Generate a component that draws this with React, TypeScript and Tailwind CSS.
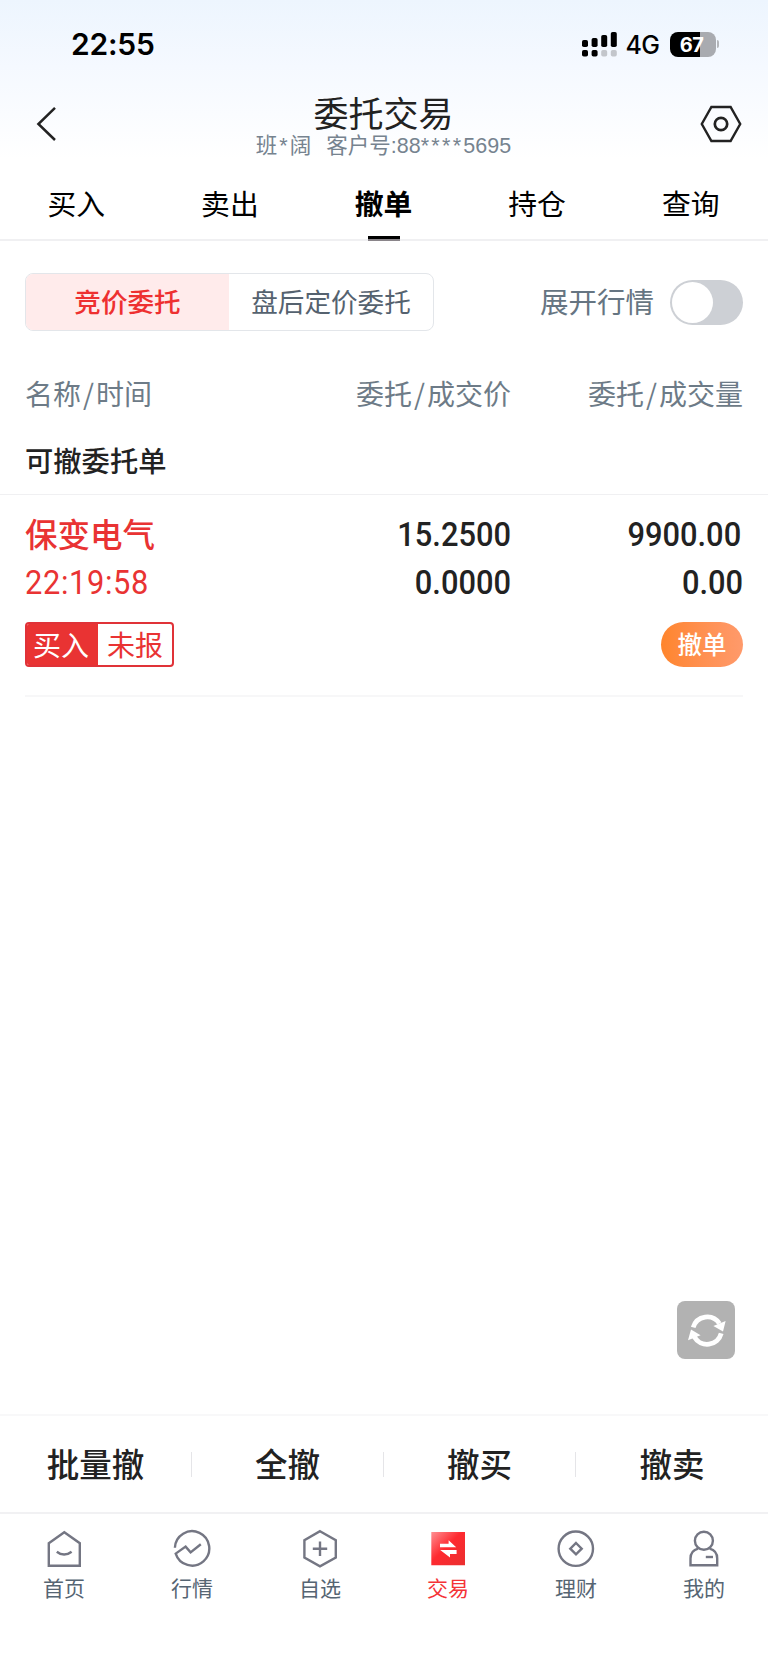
import { useState, type ReactNode } from "react";

interface Order {
  id: string;
  name: string;
  time: string;
  side: string;
  status: string;
  price: string;
  dealPrice: string;
  amount: string;
  dealAmount: string;
}

interface NavItem {
  label: string;
  icon: ReactNode;
}

const tabs = ["买入", "卖出", "撤单", "持仓", "查询"];

const actions = ["批量撤", "全撤", "撤买", "撤卖"];

const orders: Order[] = [
  {
    id: "1",
    name: "保变电气",
    time: "22:19:58",
    side: "买入",
    status: "未报",
    price: "15.2500",
    dealPrice: "0.0000",
    amount: "9900.00",
    dealAmount: "0.00",
  },
];

const navItems: NavItem[] = [
  {
    label: "首页",
    icon: (
      <svg className="w-10 h-10" viewBox="0 0 40 40" fill="none" stroke="#747683" strokeWidth={2.4}>
        <path d="M4.8 14.2L20.3 3.2L35.8 14.2V36.7H4.8Z" />
        <path d="M12.8 22.7Q20 28.5 27.6 22.7" />
      </svg>
    ),
  },
  {
    label: "行情",
    icon: (
      <svg className="w-10 h-10" viewBox="0 0 40 40" fill="none" stroke="#747683" strokeWidth={2.4}>
        <path d="M2.9 18.8A17.2 17.2 0 1 1 3.7 24.6L13.6 17.6L18.6 23.4L28.8 15.2" />
      </svg>
    ),
  },
  {
    label: "自选",
    icon: (
      <svg className="w-10 h-10" viewBox="0 0 40 40" fill="none" stroke="#747683" strokeWidth={2.4}>
        <path d="M20 2.2L35.8 11.2V28.6L20 37.4L4.4 28.6V11.2Z" />
        <path d="M20 12.5V27M12.8 19.7H27.2" />
      </svg>
    ),
  },
  {
    label: "交易",
    icon: (
      <svg className="w-10 h-10" viewBox="0 0 40 40">
        <defs>
          <linearGradient id="trade" x1="0" y1="0" x2="1" y2="1">
            <stop offset="0" stopColor="#ff8f92" />
            <stop offset="0.45" stopColor="#fe2a30" />
            <stop offset="1" stopColor="#ea2f2f" />
          </linearGradient>
        </defs>
        <path d="M3.3 3H37V36.3H3.3Z" fill="url(#trade)" />
        <path d="M12 14.8H20.6V11.2L28.2 18.2H12ZM28.6 21V25H22V28.6L12.2 21Z" fill="#fff" />
      </svg>
    ),
  },
  {
    label: "理财",
    icon: (
      <svg className="w-10 h-10" viewBox="0 0 40 40" fill="none" stroke="#747683" strokeWidth={2.4}>
        <circle cx="19.8" cy="19.7" r="17.2" />
        <path d="M20 14L25.7 19.7L20 25.4L14.3 19.7Z" />
      </svg>
    ),
  },
  {
    label: "我的",
    icon: (
      <svg className="w-10 h-10" viewBox="0 0 40 40" fill="none" stroke="#747683" strokeWidth={2.4}>
        <circle cx="19.9" cy="11.8" r="9" />
        <path d="M14.2 19.6Q6.5 21.5 6.5 29.5V36.3H33.2V29.5Q33.2 21.5 25.6 19.6" />
        <path d="M21.8 28H29" />
      </svg>
    ),
  },
];

function StatusBar() {
  return (
    <div className="flex h-[84px] items-center justify-between pl-[71px] pr-[49px] pt-[4px] font-['Inter',sans-serif] text-black">
      <span className="text-[30px] font-semibold leading-none tracking-[-0.2px]">22:55</span>
      <div className="flex items-center">
        <svg className="h-[25px] w-[35px]" viewBox="0 0 35 25">
          <rect x="0" y="8" width="6" height="7" rx="1.8" />
          <rect x="9.6" y="6" width="6" height="9" rx="1.8" />
          <rect x="19.2" y="3" width="6" height="12" rx="1.8" />
          <rect x="28.8" y="0" width="6" height="15" rx="1.8" />
          <rect x="0" y="18" width="6" height="6.5" rx="1.8" />
          <rect x="9.6" y="18" width="6" height="6.5" rx="1.8" />
          <rect x="19.2" y="18" width="6" height="6.5" rx="1.8" fill="#c3c6cb" />
          <rect x="28.8" y="18" width="6" height="6.5" rx="1.8" fill="#c3c6cb" />
        </svg>
        <span className="ml-[9px] w-[34px] whitespace-nowrap pt-[2px] text-[25px] font-medium leading-none tracking-[-0.6px]">
          4G
        </span>
        <div className="ml-[10px] flex h-[25px] w-[46px] items-center justify-center rounded-[8px] bg-[linear-gradient(90deg,#000_66%,#a9abb0_66%)] pr-[2px] pt-[1px] text-[20px] font-bold leading-none tracking-[-0.5px] text-white">
          67
        </div>
        <div className="ml-[1px] h-[8px] w-[2.5px] rounded-r-full bg-[#b4b6ba]" />
      </div>
    </div>
  );
}

function Header() {
  return (
    <header className="flex h-[84px] items-start justify-between pl-[36px] pr-[26px]">
      <button className="mt-[22px]">
        <svg className="h-[36px] w-[22px]" viewBox="0 0 22 36" fill="none" stroke="#222" strokeWidth={2.5}>
          <path d="M19 1.8L2.4 18L19 34" />
        </svg>
      </button>
      <div className="flex flex-col items-center pl-[9px]">
        <h1 className="mt-[9px] h-[41px] text-[35px] leading-[38px] text-[#222]">委托交易</h1>
        <p className="h-[24px] whitespace-pre text-[21.5px] leading-[24px] text-[#76838f] font-['Liberation_Sans','Noto_Sans_CJK_SC',sans-serif]">
          班<span className="px-[2px]">*</span>阔<span className="pl-[15px]">客户号:88</span>
          <span className="tracking-[2.3px]">****</span>5695
        </p>
      </div>
      <button className="mt-[20px]">
        <svg className="h-[40px] w-[42px]" viewBox="0 0 42 40" fill="none" stroke="#222" strokeWidth={2.4}>
          <path d="M11.4 3H30.6L40.2 20L30.6 37H11.4L1.8 20Z" />
          <circle cx="21" cy="20" r="6.2" strokeWidth={2.7} />
        </svg>
      </button>
    </header>
  );
}

export default function App() {
  const [activeTab, setActiveTab] = useState("撤单");
  const [expanded, setExpanded] = useState(false);

  return (
    <div className="flex h-[1662px] w-[768px] flex-col overflow-hidden bg-white font-['Noto_Sans_CJK_SC',sans-serif] text-[#222]">
      <div className="bg-[linear-gradient(180deg,#edf5fe_0%,#f5f9ff_40%,#fff_95%)]">
        <StatusBar />
        <Header />
      </div>

      {/* Tabs */}
      <nav className="grid h-[73px] grid-cols-5 border-b-2 border-[#f0f0f2]">
        {tabs.map((tab) => (
          <button
            key={tab}
            className={`relative text-[28.8px] leading-[69px] text-black ${activeTab === tab ? "font-bold" : ""}`}
            onClick={() => setActiveTab(tab)}
          >
            <span className="block h-[71px] pr-[1px]">{tab}</span>
            {activeTab === tab && (
              <span className="absolute -bottom-[2px] left-1/2 h-[5px] w-[32px] -translate-x-1/2 border-b-2 border-[#8a858a] bg-black" />
            )}
          </button>
        ))}
      </nav>

      {/* Order type and quote switch */}
      <div className="mt-[32px] flex h-[58px] items-center justify-between px-[25px]">
        <div className="flex h-full w-[409px] overflow-hidden rounded-[8px] border border-[#e3e6ea] text-[26.6px]">
          <button className="w-[203px] bg-[#ffebeb] pb-[3px] font-medium text-[#ee3030]">竞价委托</button>
          <button className="flex-1 pb-[3px] text-[#55626f]">盘后定价委托</button>
        </div>
        <div className="flex items-center gap-[16px]">
          <span className="pb-[2px] text-[28.5px] text-[#667582]">展开行情</span>
          <button
            className={`flex h-[45px] w-[73px] items-center rounded-full bg-[#cdd0d5] px-[2px] ${expanded ? "justify-end" : ""}`}
            onClick={() => setExpanded(!expanded)}
          >
            <span className="size-[41px] rounded-full bg-white" />
          </button>
        </div>
      </div>

      {/* List header */}
      <div className="mt-[42px] flex h-[40px] items-center px-[25px] text-[28px] text-[#6d7b87]">
        <span className="w-[243px]">
          名称<span className="px-[2px]">/</span>时间
        </span>
        <span className="w-[243px] text-right">
          委托<span className="px-[2px]">/</span>成交价
        </span>
        <span className="flex-1 text-right">
          委托<span className="px-[2px]">/</span>成交量
        </span>
      </div>
      <h2 className="mt-[27px] h-[55px] border-b border-[#f0f0f2] px-[25px] text-[28.3px] font-medium leading-[39px]">
        可撤委托单
      </h2>

      {/* Digits are squeezed horizontally to get a DIN-like shape */}
      {orders.map((order) => (
        <div key={order.id} className="mx-[25px] h-[202px] border-b-2 border-[#f7f7f8] pt-[14px]">
          <div className="flex h-[48px] items-center text-[32.5px] font-medium">
            <span className="w-[243px] text-[#e93333]">{order.name}</span>
            <span className="w-[243px] origin-right scale-x-[0.92] pt-[4px] text-right font-['Roboto',sans-serif] text-[33.5px]">{order.price}</span>
            <span className="flex-1 origin-right scale-x-[0.92] pr-[2px] pt-[4px] text-right font-['Roboto',sans-serif] text-[33.5px]">{order.amount}</span>
          </div>
          <div className="flex h-[48px] items-center pt-[4px] font-['Roboto',sans-serif] text-[33.5px]">
            <span className="w-[243px] origin-left scale-x-[0.92] tracking-[0.7px] text-[#e93333]">{order.time}</span>
            <span className="w-[243px] origin-right scale-x-[0.92] text-right font-medium">{order.dealPrice}</span>
            <span className="flex-1 origin-right scale-x-[0.92] text-right font-medium">{order.dealAmount}</span>
          </div>
          <div className="mt-[17px] flex h-[45px] items-center justify-between">
            <div className="flex h-full w-[149px] overflow-hidden rounded-[4px] border-2 border-[#e03238] text-[28px] leading-[40px]">
              <span className="w-[71px] bg-[#e93333] pr-[3px] text-center text-white">{order.side}</span>
              <span className="flex-1 text-center text-[#e93333]">{order.status}</span>
            </div>
            <button className="h-full w-[82px] rounded-full bg-linear-to-r from-[#ff852b] to-[#ff9a6b] text-[24.5px] font-medium text-white">
              撤单
            </button>
          </div>
        </div>
      ))}

      <div className="flex flex-1 items-end justify-end pb-[55px] pr-[33px]">
        <button>
          <svg className="size-[58px]" viewBox="0 0 58 58">
            <rect width="58" height="58" rx="8" fill="#b2b2b2" />
            <g fill="none" stroke="#fff" strokeWidth={4.8}>
              <path d="M16.2 26.4A14.6 14.6 0 0 1 42.4 22.5" />
              <path d="M44.2 32.4A14.6 14.6 0 0 1 17.4 36" />
            </g>
            <path d="M48.6 20L46 30.4L36.4 25Z" fill="#fff" />
            <path d="M11 39.2L14 28.4L23.6 34.2Z" fill="#fff" />
          </svg>
        </button>
      </div>

      {/* Batch actions */}
      <div className="grid h-[98px] grid-cols-4 items-center border-t-2 border-[#f8f8f9]">
        {actions.map((action, i) => (
          <button
            key={action}
            className={`h-[25px] text-[32.5px] font-medium leading-[25px] ${i < 3 ? "border-r border-[#e5e5e8]" : ""}`}
          >
            <span className="block h-[29px] leading-[21px]">{action}</span>
          </button>
        ))}
      </div>

      {/* Bottom navigation */}
      <nav className="grid h-[150px] grid-cols-6 border-t-2 border-[#f1f1f3]">
        {navItems.map((item) => (
          <button key={item.label} className="flex flex-col items-center pt-[15px]">
            {item.icon}
            <span
              className={`mt-[4px] text-[21px] leading-[28px] ${item.label === "交易" ? "text-[#f43338]" : "text-[#566573]"}`}
            >
              {item.label}
            </span>
          </button>
        ))}
      </nav>
    </div>
  );
}
